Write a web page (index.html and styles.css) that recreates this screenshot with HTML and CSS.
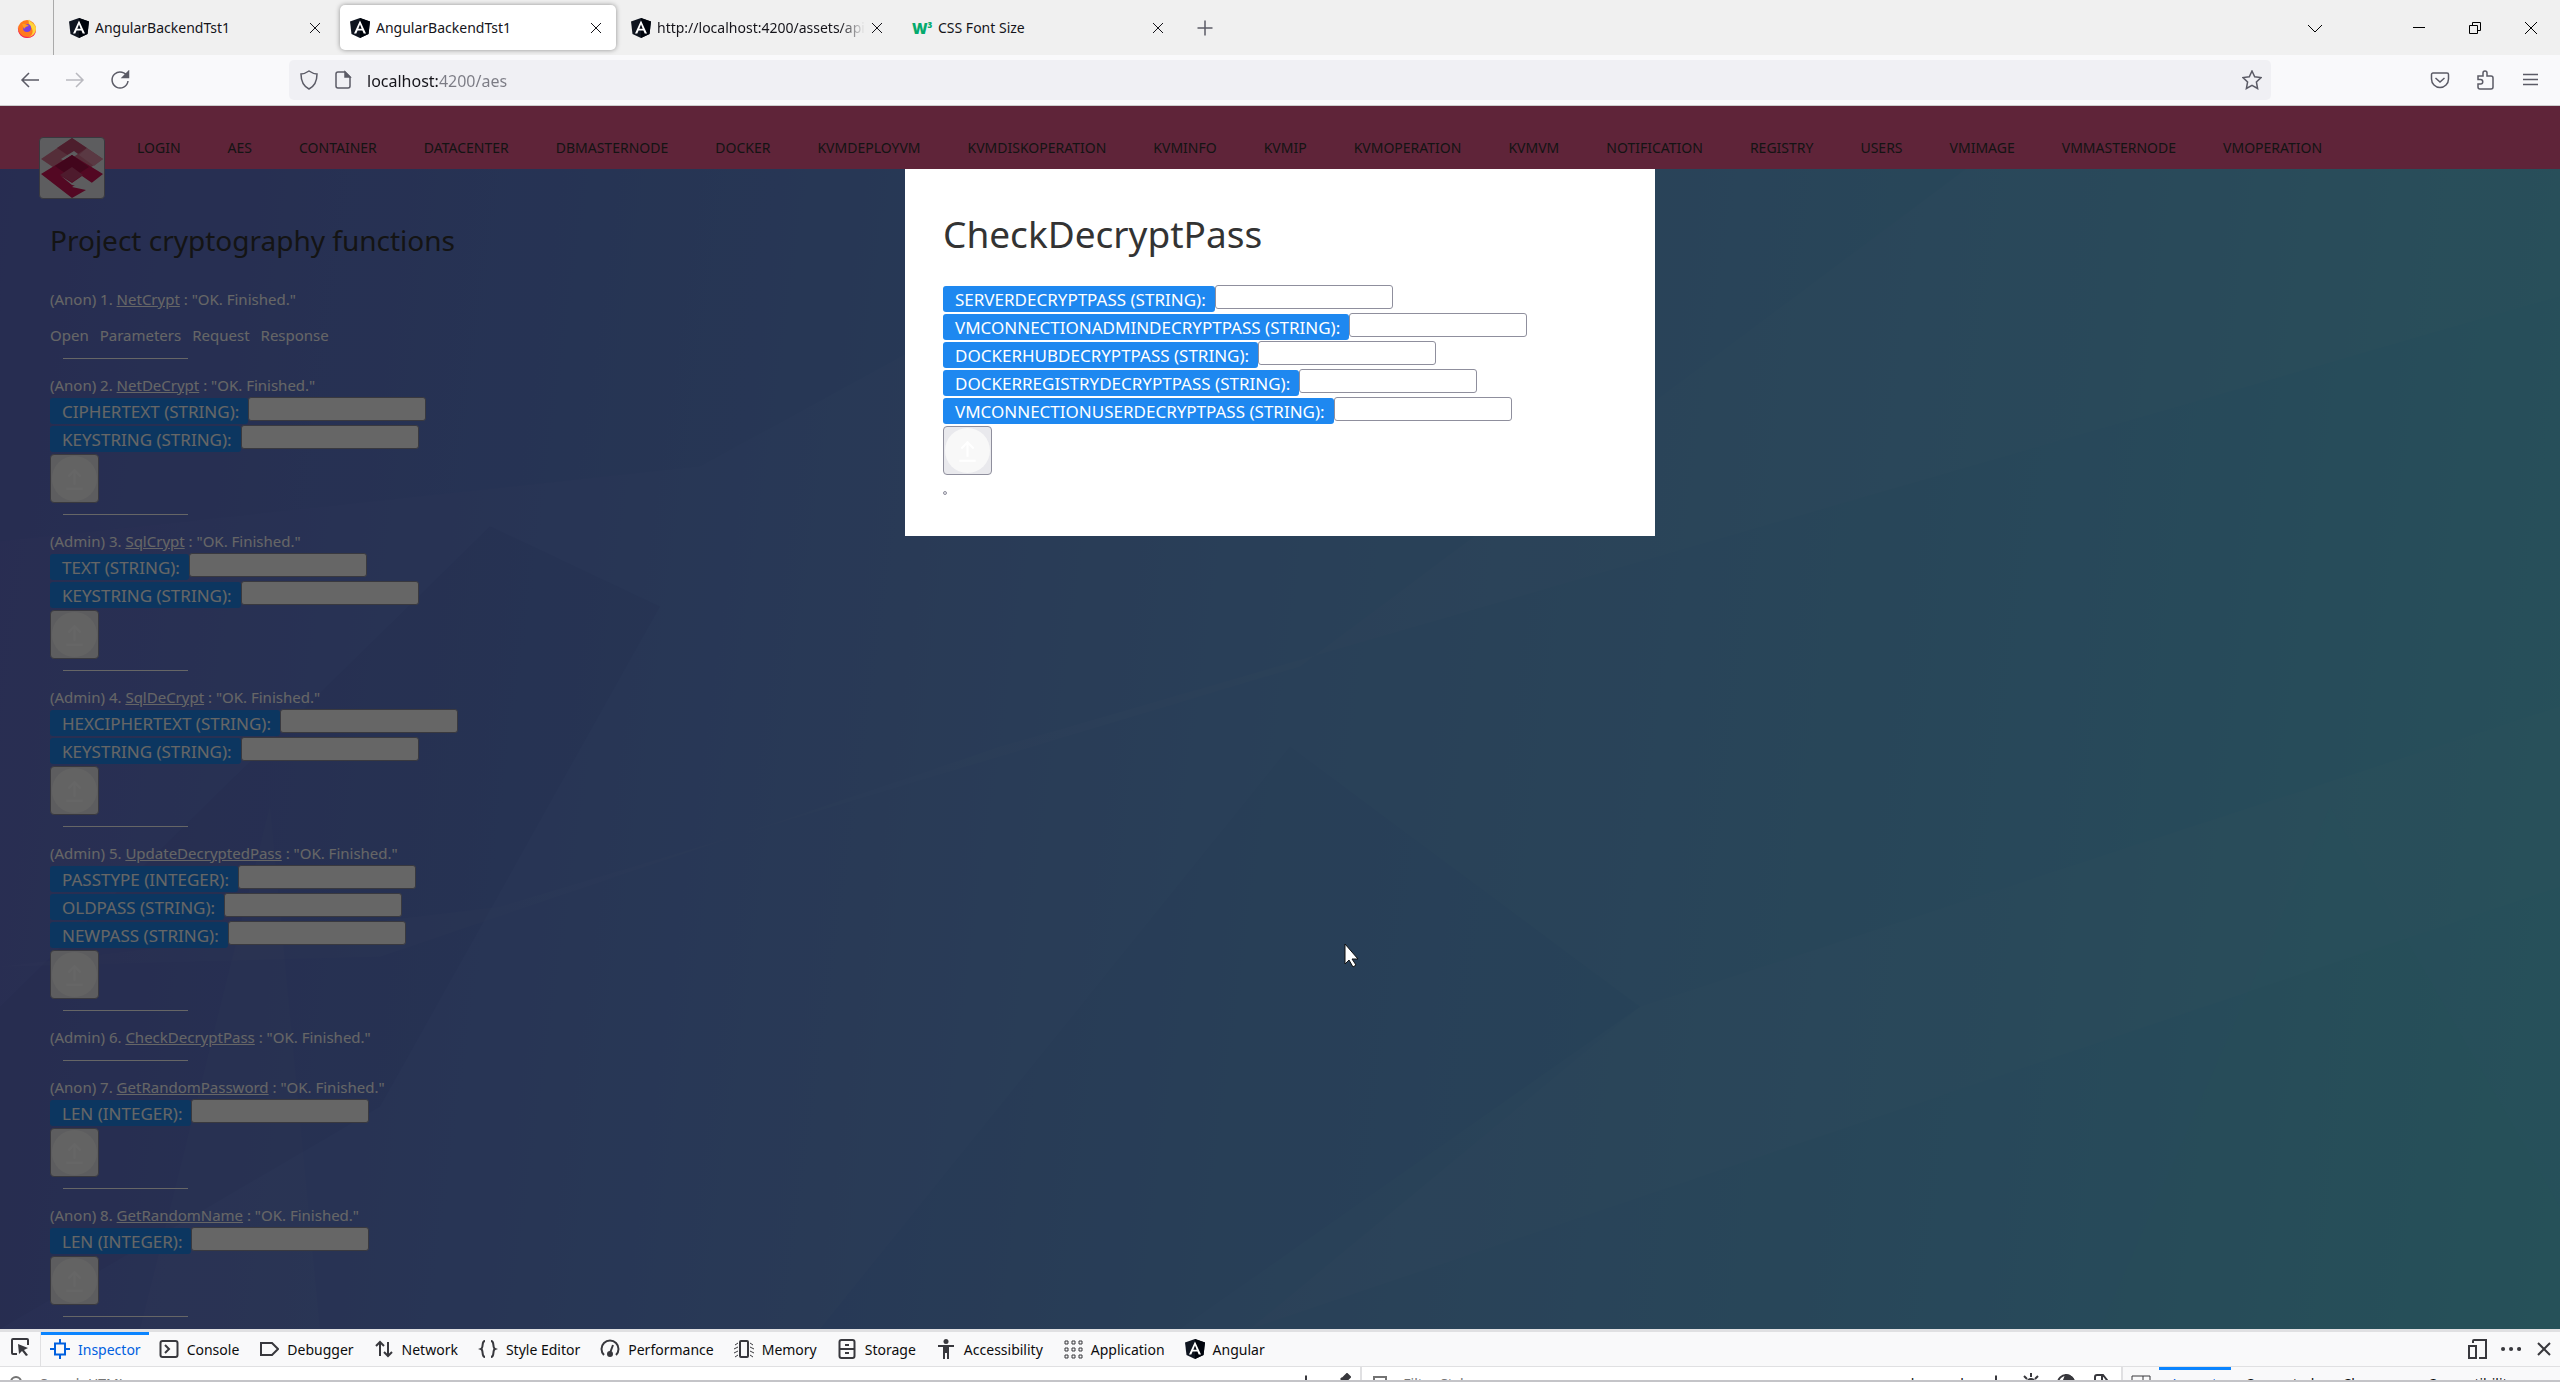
FILE: index.html
```html
<!DOCTYPE html>
<html lang="en">
<head>
    <meta charset="UTF-8">
    <meta name="viewport" content="width=device-width, initial-scale=1.0">
    <title>AngularBackendTst1</title>
    <link rel="stylesheet" href="styles.css">
</head>
<body>
    <svg class="defs" aria-hidden="true">
        <symbol id="angular" viewBox="0 0 20 20">
            <path d="M10 0L20 3.500L18.500 16L10 20L1.500 16L0 3.500Z" fill="#0f1520"/>
            <path d="M10 0L20 3.500L18.500 16L10 20Z" fill="#00040c"/>
            <path d="M10 2.500L4 15.500h2.300l1.300-3h4.800l1.300 3H16zM10 6.500l1.700 4.200H8.300z" fill="#fff" fill-rule="evenodd"/>
        </symbol>
        <symbol id="close" viewBox="0 0 20 20"><path d="M5 5l10 10M15 5L5 15"/></symbol>
        <symbol id="plus" viewBox="0 0 20 20"><path d="M10 2.500v15M2.500 10h15"/></symbol>
        <symbol id="upload" viewBox="0 0 44 44">
            <circle cx="22" cy="22" r="22" fill="#f8f8f8"/>
            <path d="M22 28V14M16 20l6-6 6 6M14 32h16" fill="none" stroke="#fff" stroke-width="2"/>
        </symbol>
    </svg>

    <div class="tabs">
        <div class="firefox">
            <svg viewBox="0 0 20 20">
                <circle cx="10" cy="11" r="9" fill="#ff7a1c"/>
                <path d="M12 1c0 3 6 4 7 9 0 6-4 10-9 10 6-2 7-7 4-11-2-2-3-5-2-8z" fill="#ffd43a"/>
                <path d="M1 8c0 8 5 11 10 11 4 0 7-3 8-7 0 5-4 8-9 8C5 20 0 16 1 8z" fill="#f5215e"/>
                <circle cx="10" cy="10" r="4" fill="#7a3fe0"/>
                <path d="M5 6c3-1 5 1 7 2-2 0-4 1-5 3z" fill="#ff9a1f"/>
            </svg>
        </div>
        <div class="tab">
            <svg class="favicon"><use href="#angular"/></svg>
            <span class="tab-title">AngularBackendTst1</span>
            <button class="icon-btn" aria-label="Close tab"><svg><use href="#close"/></svg></button>
        </div>
        <div class="tab active">
            <svg class="favicon"><use href="#angular"/></svg>
            <span class="tab-title">AngularBackendTst1</span>
            <button class="icon-btn" aria-label="Close tab"><svg><use href="#close"/></svg></button>
        </div>
        <div class="tab">
            <svg class="favicon"><use href="#angular"/></svg>
            <span class="tab-title fade">http://localhost:4200/assets/api/</span>
            <button class="icon-btn" aria-label="Close tab"><svg><use href="#close"/></svg></button>
        </div>
        <div class="tab">
            <span class="w3">W<sup>3</sup></span>
            <span class="tab-title">CSS Font Size</span>
            <button class="icon-btn" aria-label="Close tab"><svg><use href="#close"/></svg></button>
        </div>
        <button class="icon-btn new-tab" aria-label="New tab"><svg><use href="#plus"/></svg></button>
        <div class="window-btns">
            <button class="icon-btn list-tabs" aria-label="List tabs"><svg viewBox="0 0 20 20"><path d="M3 7l7 7 7-7"/></svg></button>
            <button class="icon-btn" aria-label="Minimize"><svg viewBox="0 0 20 20"><path d="M4 9.500h12"/></svg></button>
            <button class="icon-btn" aria-label="Restore"><svg viewBox="0 0 20 20"><path d="M4.500 7.500h8v8h-8zM7.500 7V4.500h8v8H13"/></svg></button>
            <button class="icon-btn" aria-label="Close"><svg viewBox="0 0 20 20"><path d="M4 4l12 12M16 4L4 16"/></svg></button>
        </div>
    </div>

    <div class="toolbar">
        <div class="nav-btns">
            <button class="icon-btn" aria-label="Back"><svg viewBox="0 0 20 20"><path d="M19 10H2M9 3l-7 7 7 7"/></svg></button>
            <button class="icon-btn" aria-label="Forward" disabled><svg viewBox="0 0 20 20"><path d="M1 10h17M11 3l7 7-7 7"/></svg></button>
            <button class="icon-btn" aria-label="Reload"><svg viewBox="0 0 20 20"><path d="M17.500 7A8 8 0 1 0 18 11"/><path d="M18.500 1.500v6h-6z" fill="#5b5b66"/></svg></button>
        </div>
        <div class="urlbar">
            <svg viewBox="0 0 20 20"><path d="M10 1c3 2 5 3 8 3 0 7-2 12-8 15C4 16 2 11 2 4c3 0 5-1 8-3z"/></svg>
            <svg viewBox="0 0 20 20"><path d="M12 2H5a2 2 0 0 0-2 2v12a2 2 0 0 0 2 2h10a2 2 0 0 0 2-2V7z"/><path d="M12 2v5h5z" fill="#5b5b66"/></svg>
            <input class="url" type="text" value="localhost:4200/aes" aria-label="Address">
            <svg viewBox="0 0 20 20"><path d="M10 1l2.700 5.800 6.300.8-4.600 4.300 1.200 6.600L10 15.300l-5.600 3.200 1.200-6.600L1 7.600l6.300-.8z"/></svg>
        </div>
        <div class="menu-btns">
            <button class="icon-btn" aria-label="Pocket"><svg viewBox="0 0 20 20"><path d="M3 3h14a1.500 1.500 0 0 1 1.500 1.500V9a8.500 8.500 0 0 1-17 0V4.500A1.500 1.500 0 0 1 3 3zM5.500 8l4.500 4 4.500-4"/></svg></button>
            <button class="icon-btn" aria-label="Extensions"><svg viewBox="0 0 20 20"><path d="M3 6h5V3a2 2 0 0 1 4 0v3h4a2 2 0 0 1 2 2v9a2 2 0 0 1-2 2H5a2 2 0 0 1-2-2v-3h2.500a2 2 0 0 0 0-4.500H3z"/></svg></button>
            <button class="icon-btn" aria-label="Menu"><svg viewBox="0 0 20 20"><path d="M3 4.500h15M3 9.500h15M3 14.500h15"/></svg></button>
        </div>
    </div>

    <div class="page">
        <svg class="facets" viewBox="0 0 2560 1222" preserveAspectRatio="none" aria-hidden="true">
            <path d="M0 435L700 360 1250 60 900 0H0z" fill="#3060b0" opacity=".05"/>
            <path d="M490 420L660 500 380 1000 0 1222V900z" fill="#203080" opacity=".06"/>
            <path d="M0 860L380 850 1000 640 2560 190V0H2050L1300 560 500 800z" fill="#fff" opacity=".03"/>
            <path d="M1290 640L1640 900 1180 1222H820z" fill="#204090" opacity=".03"/>
            <path d="M1250 1222L2560 780V600L1640 900z" fill="#fff" opacity=".03"/>
            <path d="M2100 1222L2330 700 2560 1100V1222z" fill="#50e0d0" opacity=".04"/>
            <path d="M270 700L320 1222H140z" fill="#fff" opacity=".03"/>
        </svg>
        <header>
            <a href="#" class="logo" aria-label="Home">
                <svg viewBox="0 0 62 60">
                    <path d="M31 0L62 21 31 42 0 21z" fill="#d5738f"/>
                    <path d="M31 0L46 10 31 20 16 10z" fill="#c04c70"/>
                    <path d="M46 10L62 21 53 28 38 17z" fill="#e090a8"/>
                    <path d="M20 21L33 13 37 16 25 24z" fill="#e9e9ed"/>
                    <path d="M31 17L62 36 48 47 42 42 31 49 45 52 31 60 0 36z" fill="#cf1457"/>
                    <path d="M31 17L48 29 31 40 14 28z" fill="#a50f46"/>
                    <path d="M31 29L42 37 31 44 19 37z" fill="#c24571"/>
                    <path d="M20 38L31 45 41 38 54 47 48 50 41 45 36 48 31 47z" fill="#e9e9ed"/>
                </svg>
            </a>
            <nav>
                <a href="#">LOGIN</a>
                <a href="#">AES</a>
                <a href="#">CONTAINER</a>
                <a href="#">DATACENTER</a>
                <a href="#">DBMASTERNODE</a>
                <a href="#">DOCKER</a>
                <a href="#">KVMDEPLOYVM</a>
                <a href="#">KVMDISKOPERATION</a>
                <a href="#">KVMINFO</a>
                <a href="#">KVMIP</a>
                <a href="#">KVMOPERATION</a>
                <a href="#">KVMVM</a>
                <a href="#">NOTIFICATION</a>
                <a href="#">REGISTRY</a>
                <a href="#">USERS</a>
                <a href="#">VMIMAGE</a>
                <a href="#">VMMASTERNODE</a>
                <a href="#">VMOPERATION</a>
            </nav>
        </header>
        <main>
            <h1>Project cryptography functions</h1>

            <p>(Anon) 1. <a href="#">NetCrypt</a> : "OK. Finished."</p>
            <div class="details">
                <span>Open</span><span>Parameters</span><span>Request</span><span>Response</span>
            </div>
            <hr>

            <p>(Anon) 2. <a href="#">NetDeCrypt</a> : "OK. Finished."</p>
            <form>
                <div class="row"><label for="net-cipher">CIPHERTEXT (STRING):</label><input type="text" id="net-cipher"></div>
                <div class="row"><label for="net-key">KEYSTRING (STRING):</label><input type="text" id="net-key"></div>
                <button class="send" type="button" aria-label="Send"><svg><use href="#upload"/></svg></button>
            </form>
            <hr>

            <p>(Admin) 3. <a href="#">SqlCrypt</a> : "OK. Finished."</p>
            <form>
                <div class="row"><label for="sql-text">TEXT (STRING):</label><input type="text" id="sql-text"></div>
                <div class="row"><label for="sql-key">KEYSTRING (STRING):</label><input type="text" id="sql-key"></div>
                <button class="send" type="button" aria-label="Send"><svg><use href="#upload"/></svg></button>
            </form>
            <hr>

            <p>(Admin) 4. <a href="#">SqlDeCrypt</a> : "OK. Finished."</p>
            <form>
                <div class="row"><label for="sqlde-hex">HEXCIPHERTEXT (STRING):</label><input type="text" id="sqlde-hex"></div>
                <div class="row"><label for="sqlde-key">KEYSTRING (STRING):</label><input type="text" id="sqlde-key"></div>
                <button class="send" type="button" aria-label="Send"><svg><use href="#upload"/></svg></button>
            </form>
            <hr>

            <p>(Admin) 5. <a href="#">UpdateDecryptedPass</a> : "OK. Finished."</p>
            <form>
                <div class="row"><label for="passtype">PASSTYPE (INTEGER):</label><input type="text" id="passtype"></div>
                <div class="row"><label for="oldpass">OLDPASS (STRING):</label><input type="text" id="oldpass"></div>
                <div class="row"><label for="newpass">NEWPASS (STRING):</label><input type="text" id="newpass"></div>
                <button class="send" type="button" aria-label="Send"><svg><use href="#upload"/></svg></button>
            </form>
            <hr>

            <p>(Admin) 6. <a href="#">CheckDecryptPass</a> : "OK. Finished."</p>
            <hr>

            <p>(Anon) 7. <a href="#">GetRandomPassword</a> : "OK. Finished."</p>
            <form>
                <div class="row"><label for="pass-len">LEN (INTEGER):</label><input type="text" id="pass-len"></div>
                <button class="send" type="button" aria-label="Send"><svg><use href="#upload"/></svg></button>
            </form>
            <hr>

            <p>(Anon) 8. <a href="#">GetRandomName</a> : "OK. Finished."</p>
            <form>
                <div class="row"><label for="name-len">LEN (INTEGER):</label><input type="text" id="name-len"></div>
                <button class="send" type="button" aria-label="Send"><svg><use href="#upload"/></svg></button>
            </form>
            <hr>
        </main>

        <div class="overlay">
            <div class="modal" role="dialog" aria-labelledby="modal-title">
                <h2 id="modal-title">CheckDecryptPass</h2>
                <form>
                    <div class="row"><label for="server">SERVERDECRYPTPASS (STRING):</label><input type="text" id="server"></div>
                    <div class="row"><label for="vm-admin">VMCONNECTIONADMINDECRYPTPASS (STRING):</label><input type="text" id="vm-admin"></div>
                    <div class="row"><label for="hub">DOCKERHUBDECRYPTPASS (STRING):</label><input type="text" id="hub"></div>
                    <div class="row"><label for="registry">DOCKERREGISTRYDECRYPTPASS (STRING):</label><input type="text" id="registry"></div>
                    <div class="row"><label for="vm-user">VMCONNECTIONUSERDECRYPTPASS (STRING):</label><input type="text" id="vm-user"></div>
                    <button class="send" type="button" aria-label="Send"><svg><use href="#upload"/></svg></button>
                </form>
                <button class="dismiss" aria-label="Close"></button>
            </div>
        </div>
        <svg class="cursor" viewBox="0 0 16 25" aria-hidden="true"><path d="M1 1v20l4-4 4 7 3-2-4-6h6z" fill="#fff" stroke="#111" stroke-width="1"/></svg>
    </div>

    <div class="devtools">
        <div class="panels">
            <button class="picker" aria-label="Pick an element"><svg viewBox="0 0 20 20"><path d="M7 17H3a1 1 0 0 1-1-1V3a1 1 0 0 1 1-1h14a1 1 0 0 1 1 1v5"/><path d="M8 7l10 4-4 2 4 5-2 1-4-5-3 3z" fill="#38383d" stroke="none"/></svg></button>
            <button class="panel selected"><svg viewBox="0 0 20 20"><path d="M5 4.500h10v11H5zM10 0v4M10 16v4M0 10h4M16 10h4"/></svg>Inspector</button>
            <button class="panel"><svg viewBox="0 0 20 20"><rect x="1.500" y="2" width="17" height="16" rx="2"/><path d="M6 6l4 4-4 4"/></svg>Console</button>
            <button class="panel"><svg viewBox="0 0 20 20"><path d="M2 4h11l6 6-6 6H2z"/></svg>Debugger</button>
            <button class="panel"><svg viewBox="0 0 20 20"><path d="M6 17V3M2 7l4-4 4 4M14 3v14M10 13l4 4 4-4"/></svg>Network</button>
            <button class="panel"><svg viewBox="0 0 20 20"><path d="M7 2C3 2 6 9 3 10c3 1 0 8 4 8M13 2c4 0 1 7 4 8-3 1 0 8-4 8"/></svg>Style Editor</button>
            <button class="panel"><svg viewBox="0 0 20 20"><path d="M4 16a8.500 8.500 0 1 1 12 0M10 14l3-8"/><circle cx="10" cy="15" r="2" fill="#38383d"/></svg>Performance</button>
            <button class="panel"><svg viewBox="0 0 20 20"><rect x="6" y="2" width="8" height="16" rx="1"/><path d="M1 6l3-2M0 10l4-2M0 14l4-2M1 18l3-2M19 6l-3-2M20 10l-4-2M20 14l-4-2M19 18l-3-2" stroke-width="1"/></svg>Memory</button>
            <button class="panel"><svg viewBox="0 0 20 20"><rect x="2.500" y="1" width="15" height="18" rx="2"/><path d="M3 10h14M8 6h4M8 14h4"/></svg>Storage</button>
            <button class="panel"><svg viewBox="0 0 20 20"><circle cx="10" cy="2.500" r="2.500" fill="#38383d" stroke="none"/><path d="M2 6h16v2h-5v12h-2v-6H9v6H7V8H2z" fill="#38383d" stroke="none"/></svg>Accessibility</button>
            <button class="panel"><svg viewBox="0 0 20 20"><path d="M2 2h3v3H2zM9 2h3v3H9zM16 2h3v3h-3zM2 9h3v3H2zM9 9h3v3H9zM16 9h3v3h-3zM2 16h3v3H2zM9 16h3v3H9zM16 16h3v3h-3z" stroke-width="1"/></svg>Application</button>
            <button class="panel"><svg><use href="#angular"/></svg>Angular</button>
            <div class="panel-btns">
                <button class="icon-btn" aria-label="Responsive mode"><svg viewBox="0 0 20 20"><path d="M1 7h7v12H1z" /><path d="M5 4V2a1 1 0 0 1 1-1h12v18h-7"/></svg></button>
                <button class="icon-btn" aria-label="More"><svg viewBox="0 0 20 20"><path d="M2 10h.1M10 10h.1M18 10h.1" stroke-width="4" stroke-linecap="round"/></svg></button>
                <button class="icon-btn" aria-label="Close tools"><svg viewBox="0 0 20 20"><path d="M4 4l12 12M16 4L4 16"/></svg></button>
            </div>
        </div>
        <div class="subbar">
            <div class="markup">
                <svg class="small" viewBox="0 0 16 16"><circle cx="7" cy="7" r="5"/></svg>
                <input type="text" placeholder="Search HTML" aria-label="Search HTML">
                <button class="icon-btn add" aria-label="Add node"><svg><use href="#plus"/></svg></button>
                <button class="icon-btn" aria-label="Eyedropper"><svg viewBox="0 0 20 20"><path d="M12 5l4-4 3 3-4 4zM10 5l5 5-9 9" fill="#38383d"/></svg></button>
            </div>
            <div class="rules">
                <svg class="small" viewBox="0 0 16 16"><path d="M2 2h12v3l-4 4v5H6V9L2 5z"/></svg>
                <input type="text" placeholder="Filter Styles" aria-label="Filter Styles">
                <button>:hov</button>
                <button>.cls</button>
                <button class="icon-btn" aria-label="Add rule"><svg><use href="#plus"/></svg></button>
                <button class="icon-btn" aria-label="Light scheme"><svg viewBox="0 0 20 20"><circle cx="10" cy="10" r="4" fill="#38383d"/><path d="M10 0v4M3 3l3 3M17 3l-3 3M0 9h4M16 9h4"/></svg></button>
                <button class="icon-btn" aria-label="Dark scheme"><svg viewBox="0 0 20 20"><circle cx="10" cy="10" r="8"/><path d="M10 2a8 8 0 0 1 8 8h-8l-5 5z" fill="#38383d"/></svg></button>
                <button class="icon-btn" aria-label="Print styles"><svg viewBox="0 0 20 20"><path d="M4 18V4a2 2 0 0 1 2-2h6l4 5v11zM11 2v6h5"/></svg></button>
            </div>
            <div class="sidebar">
                <button class="icon-btn" aria-label="Toggle pane"><svg viewBox="0 0 20 20"><path d="M1 3h18v14H1zM12 3v14" stroke-width="1"/></svg></button>
                <button class="side-tab selected">Layout</button>
                <button class="side-tab">Computed</button>
                <button class="side-tab">Changes</button>
                <button class="side-tab">Compatibility</button>
            </div>
        </div>
    </div>
</body>
</html>
```
FILE: styles.css
```css
*{
    margin:0;
    padding:0;
    box-sizing:border-box;
}
body{
    height:100vh;
    display:flex;
    flex-direction:column;
    overflow:hidden;
    font-family:"Noto Sans","Open Sans",sans-serif;
    font-size:14px;
    color:#15141a;
    background:#fff;
}
button,input{
    font:inherit;
    color:inherit;
}
svg{
    width:20px;
    height:20px;
    flex:none;
    fill:none;
    stroke:#5b5b66;
    stroke-width:1.5;
}
.defs{
    position:absolute;
    width:0;
    height:0;
}
#angular,#upload circle{
    stroke:none;
}
.icon-btn{
    display:grid;
    place-items:center;
    width:20px;
    height:20px;
    border:none;
    background:none;
}
.icon-btn:disabled{
    opacity:.4;
}

/* browser tabs */
.tabs{
    display:flex;
    align-items:center;
    gap:5px;
    height:55px;
    background:#f0f0f0;
}
.firefox{
    display:grid;
    place-items:center;
    width:54px;
    height:55px;
    border-right:1px solid #aaa;
}
.firefox svg{
    stroke:none;
}
.tab{
    display:flex;
    align-items:center;
    gap:6px;
    width:276px;
    height:45px;
    padding:0 10px;
    border-radius:5px;
}
.tab.active{
    background:#fff;
    box-shadow:0 0 5px rgba(0,0,0,.4);
}
.tab .icon-btn svg{
    stroke-width:1;
    stroke:#15141a;
}
.tab-title{
    flex:1;
    overflow:hidden;
    white-space:nowrap;
}
.fade{
    margin-right:-4px;
    mask-image:linear-gradient(to right,#000 88%,transparent);
}
.w3{
    width:20px;
    color:#04aa6d;
    font-weight:900;
    font-size:15px;
    white-space:nowrap;
}
.w3 sup{
    font-size:8px;
}
.new-tab{
    margin-left:12px;
}
.window-btns{
    display:flex;
    gap:36px;
    margin-left:auto;
    padding-right:19px;
}
.window-btns svg{
    stroke:#000;
    stroke-width:1;
}
.list-tabs{
    margin-right:48px;
}

/* address bar */
.toolbar{
    display:flex;
    align-items:center;
    height:51px;
    background:#f9f9fb;
    border-bottom:1px solid #ccc;
}
.nav-btns,.menu-btns{
    display:flex;
    gap:25px;
    padding:0 20px;
}
.urlbar{
    flex:1;
    display:flex;
    align-items:center;
    gap:14px;
    height:40px;
    margin:0 139px;
    padding:0 9px 0 10px;
    border-radius:5px;
    background:#f0f0f4;
}
.url{
    flex:1;
    height:24px;
    padding-top:2px;
    border:none;
    font-size:16px;
    color:transparent;
    background:linear-gradient(to right,#15141a 72px,#7b7b84 72px);
    background-clip:text;
    -webkit-background-clip:text;
}

/* page */
.page{
    position:relative;
    flex:1;
    overflow:hidden;
    background:linear-gradient(98deg,#6670cc 0%,#6484d4 22%,#68a0dc 50%,#64b4e0 78%,#60cae0 100%);
}
.facets{
    position:absolute;
    inset:0;
    width:100%;
    height:100%;
    stroke:none;
}
header{
    position:relative;
    display:flex;
    align-items:flex-start;
    gap:32px;
    height:63px;
    padding:31px 39px 0;
    background:#ed5a8f;
}
.logo{
    display:block;
    width:66px;
    height:62px;
    border:1px solid #8f8f9d;
    border-radius:4px;
    background:#e9e9ed;
}
.logo svg{
    width:64px;
    height:60px;
    stroke:none;
}
nav{
    display:flex;
    gap:47px;
}
nav a{
    color:#333;
    font-size:14px;
    line-height:21px;
    text-decoration:none;
}
main{
    position:relative;
    padding:53px 50px 0;
    color:#fff;
    font-size:15px;
    line-height:24px;
}
main a{
    color:#fff;
}
h1{
    margin-bottom:29px;
    color:#333;
    font-size:28px;
    font-weight:400;
    line-height:36px;
}
.details{
    display:flex;
    gap:11px;
    margin-top:12px;
}
hr{
    width:125px;
    margin:11px 0 14px 13px;
    border:none;
    border-top:1px solid #fff;
}
.row{
    display:flex;
    align-items:flex-start;
    height:28px;
}
.row label{
    height:26px;
    margin-top:1px;
    padding:0 9px 0 12px;
    border-radius:3px;
    background:#1e88f0;
    color:#fff;
    font-size:17px;
    line-height:28px;
}
.row input{
    width:178px;
    height:24px;
    border:1px solid #8f8f9d;
    border-radius:3px;
    background:#fff;
}
.send{
    display:grid;
    place-items:center;
    width:49px;
    height:49px;
    margin-top:1px;
    border:1px solid #8f8f9d;
    border-radius:4px;
    background:#e9e9ed;
}
.send svg{
    width:45px;
    height:45px;
}
.overlay{
    position:absolute;
    inset:0;
    padding-top:63px;
    background:rgba(0,0,0,.6);
}
.modal{
    width:750px;
    margin:0 auto;
    padding:41px 38px;
    background:#fff;
}
.modal h2{
    margin-bottom:27px;
    color:#333;
    font-size:37px;
    font-weight:400;
    line-height:48px;
}
.dismiss{
    display:block;
    width:4px;
    height:4px;
    margin-top:16px;
    border:1px solid #8f8f9d;
    border-radius:2px;
    background:#e9e9ed;
}
.cursor{
    position:absolute;
    left:1344px;
    top:837px;
    width:16px;
    height:25px;
}

/* developer tools */
.devtools{
    border-top:3px solid #e0e0e2;
    background:#f9f9fa;
    color:#0c0c0d;
}
.devtools svg{
    stroke:#38383d;
    stroke-width:2;
}
.panels{
    display:flex;
    height:35px;
    border-bottom:1px solid #e0e0e2;
}
.picker{
    width:41px;
    border:none;
    border-right:1px solid #e0e0e2;
    background:none;
}
.panel{
    display:flex;
    align-items:center;
    gap:8px;
    padding:0 10px;
    border:none;
    border-top:3px solid transparent;
    border-bottom:3px solid transparent;
    background:none;
}
.panel.selected{
    padding:0 8px 0 9px;
    border-top-color:#0a84ff;
    color:#0060df;
}
.devtools .selected svg{
    stroke:#0060df;
}
.panel-btns{
    display:flex;
    align-items:center;
    gap:13px;
    margin-left:auto;
    padding-right:6px;
}
.subbar{
    display:flex;
    align-items:flex-start;
    height:15px;
    overflow:hidden;
    border-bottom:2px solid #c4c4c8;
}
.markup,.rules,.sidebar{
    display:flex;
    align-items:center;
    gap:15px;
    height:32px;
    background:#fff;
    border-right:2px solid #e0e0e2;
}
.markup{
    flex:1369;
    padding:0 9px;
}
.rules{
    flex:753;
    padding:0 10px;
}
.sidebar{
    flex:438;
    gap:0;
    padding-left:8px;
    border:none;
    background:#f9f9fa;
}
.devtools .small{
    width:16px;
    height:16px;
    stroke:#737373;
}
.subbar input{
    flex:1;
    min-width:0;
    border:none;
    background:none;
}
.subbar button{
    border:none;
    background:none;
}
.subbar .side-tab{
    height:32px;
    padding:0 14px;
    border-top:3px solid transparent;
    border-bottom:3px solid transparent;
}
.subbar .side-tab.selected{
    margin-left:8px;
    border-top-color:#0a84ff;
    color:#0060df;
}
```
